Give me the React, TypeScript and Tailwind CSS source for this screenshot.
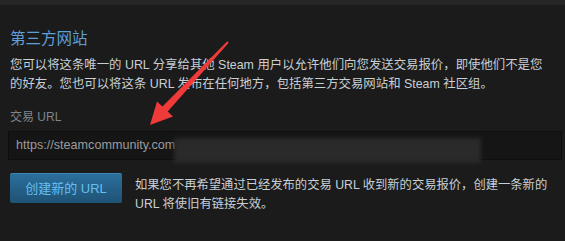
import React from "react";

const font = { fontFamily: '"Liberation Sans", "Noto Sans CJK SC", sans-serif' } as React.CSSProperties;

export default function App() {
  return (
    <div
      className="relative w-[565px] h-[241px] overflow-hidden bg-[#1b1b1c] flex flex-col font-['Liberation_Sans','Noto_Sans_CJK_SC',sans-serif]"
      style={font}
    >
      <div className="h-[5px] bg-[#262627] shrink-0" />
      <div className="flex flex-col px-[10px] pt-[22px]">
        <div className="text-[15.5px] leading-[24px] text-[#5d9fd6]">第三方网站</div>
        <p className="mt-[5px] text-[12.4px] leading-[19px] text-[#c8d0d6] whitespace-nowrap">
          您可以将这条唯一的 URL 分享给其他 Steam 用户以允许他们向您发送交易报价，即使他们不是您
          <br />
          的好友。您也可以将这条 URL 发布在任何地方，包括第三方交易网站和 Steam 社区组。
        </p>
        <div className="mt-[15px] text-[12px] leading-[16px] text-[#7e858b]">交易 URL</div>
        <div className="relative mt-[6px] ml-[-2px] w-[554px] h-[29px] bg-[#151516] border border-[#0e0e0f] flex items-center pl-[7px]">
          <span className="text-[12.6px] text-[#9c9c9c]">https://steamcommunity.com</span>
          <div className="absolute left-[165px] top-[6px] w-[307px] h-[25px] bg-[#2a2a2b] blur-[2px]" />
        </div>
        <div className="mt-[13px] flex items-start gap-[13px]">
          <button className="w-[112px] h-[30px] shrink-0 rounded-[2px] border-t border-[#3d86b6] bg-gradient-to-b from-[#2c6f9c] to-[#1e5275] text-[13px] text-[#66bff2]">
            创建新的 URL
          </button>
          <p className="mt-[3px] text-[12.3px] leading-[19px] text-[#c8d0d6] whitespace-nowrap">
            如果您不再希望通过已经发布的交易 URL 收到新的交易报价，创建一条新的
            <br />
            URL 将使旧有链接失效。
          </p>
        </div>
      </div>
      <svg className="absolute left-0 top-0 pointer-events-none" width="565" height="241" viewBox="0 0 565 241">
        <polygon
          points="150,125 157,101.5 162.5,106.6 227.3,41.3 228.7,42.7 167.7,111.4 173,116.5"
          fill="#ef3a3a"
        />
      </svg>
    </div>
  );
}
